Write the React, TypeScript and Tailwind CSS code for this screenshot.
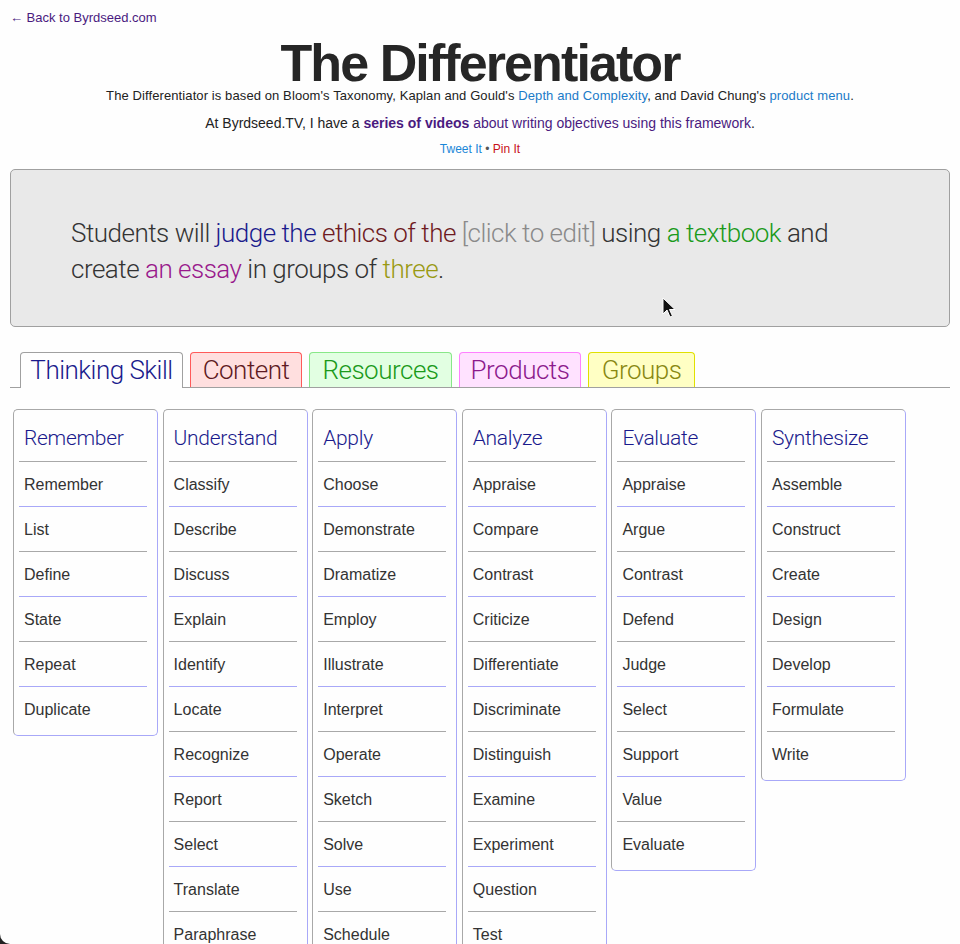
import React from "react";

const columns: { title: string; items: string[] }[] = [
  { title: "Remember", items: ["Remember", "List", "Define", "State", "Repeat", "Duplicate"] },
  {
    title: "Understand",
    items: ["Classify", "Describe", "Discuss", "Explain", "Identify", "Locate", "Recognize", "Report", "Select", "Translate", "Paraphrase", "Review"],
  },
  {
    title: "Apply",
    items: ["Choose", "Demonstrate", "Dramatize", "Employ", "Illustrate", "Interpret", "Operate", "Sketch", "Solve", "Use", "Schedule", "Write"],
  },
  {
    title: "Analyze",
    items: ["Appraise", "Compare", "Contrast", "Criticize", "Differentiate", "Discriminate", "Distinguish", "Examine", "Experiment", "Question", "Test", "Categorize"],
  },
  { title: "Evaluate", items: ["Appraise", "Argue", "Contrast", "Defend", "Judge", "Select", "Support", "Value", "Evaluate"] },
  { title: "Synthesize", items: ["Assemble", "Construct", "Create", "Design", "Develop", "Formulate", "Write"] },
];

const sans = "font-['Liberation_Sans',Arial,sans-serif]";
const light = "font-['Roboto','Liberation_Sans',sans-serif] font-light";

export default function App() {
  return (
    <div className={`relative h-[944px] overflow-hidden bg-[#fefefe] ${sans} text-[#222]`}>
      <div className="px-[10px] pt-[10px]">
        <a className="block text-[13px] leading-[16px] text-[#4a1a80]">← Back to Byrdseed.com</a>
      </div>
      <h1 className="mt-[11px] text-center text-[52px] leading-[52px] font-bold tracking-[-1.9px] text-[#262626]">
        The Differentiator
      </h1>
      <p className="mt-[-1px] text-center text-[13px] leading-[16px] tracking-[0.1px] text-[#222]">
        The Differentiator is based on Bloom's Taxonomy, Kaplan and Gould's{" "}
        <span className="text-[#1a7ac8]">Depth and Complexity</span>, and David Chung's{" "}
        <span className="text-[#1a7ac8]">product menu</span>.
      </p>
      <p className="mt-[10px] text-center text-[14px] leading-[18px] text-[#222]">
        At Byrdseed.TV, I have a <span className="font-bold text-[#4a1a80]">series of videos</span>{" "}
        <span className="text-[#4a1a80]">about writing objectives using this framework</span>.
      </p>
      <p className="mt-[9px] text-center text-[12px] leading-[16px] text-[#555]">
        <span className="text-[#1a86d8]">Tweet It</span> • <span className="text-[#c8101a]">Pin It</span>
      </p>

      <div className="mx-[10px] mt-[12px] h-[158px] rounded-[5px] border border-[#a0a0a0] bg-[#e9e9e9] pl-[60px] pt-[45px]">
        <div className={`${light} text-[26px] leading-[36px] tracking-[-0.5px] text-[#333]`}>
          <div className="whitespace-nowrap">
            Students will <span className="text-[#1a1a8c]">judge the</span>{" "}
            <span className="text-[#6e1a22]">ethics of the</span>{" "}
            <span className="text-[#8a8a8a]">[click to edit]</span> using{" "}
            <span className="text-[#1a9a1a]">a textbook</span> and
          </div>
          <div className="whitespace-nowrap">
            create <span className="text-[#99198c]">an essay</span> in groups of{" "}
            <span className="text-[#999912]">three</span>.
          </div>
        </div>
      </div>

      <div className={`mx-[10px] mt-[25px] flex items-end gap-[7px] border-b border-[#a0a0a0] pl-[10px] ${light} text-[26px] tracking-[-0.5px]`}>
        <div className="-mb-px flex h-[36px] w-[163px] items-center justify-center rounded-t-[4px] border border-b-0 border-[#a0a0a0] bg-[#fefefe] text-[#1a1a8c]">
          Thinking Skill
        </div>
        <div className="flex h-[35px] w-[112px] items-center justify-center rounded-t-[4px] border border-b-0 border-[#ff5a5a] bg-[#ffdfdf] text-[#5e1a22]">
          Content
        </div>
        <div className="flex h-[35px] w-[143px] items-center justify-center rounded-t-[4px] border border-b-0 border-[#88e888] bg-[#e2ffe2] text-[#1a9a1a]">
          Resources
        </div>
        <div className="flex h-[35px] w-[122px] items-center justify-center rounded-t-[4px] border border-b-0 border-[#ff80ff] bg-[#ffe2ff] text-[#8c1a8c]">
          Products
        </div>
        <div className="flex h-[35px] w-[107px] items-center justify-center rounded-t-[4px] border border-b-0 border-[#e0e000] bg-[#ffffc4] text-[#888812]">
          Groups
        </div>
      </div>

      <div className="mt-[21px] flex items-start gap-[4.6px] pl-[13px]">
        {columns.map((col) => (
          <div
            key={col.title}
            className="w-[145px] rounded-[5px] border border-t-[#a8a8a8] border-l-[#a8a8a8] border-r-[#a8a8f8] border-b-[#a8a8f8] pb-[4px]"
          >
            <div className="ml-[5px] mr-[10px] flex h-[52px] items-center border-b border-[#a8a8a8] pl-[5px] pt-[6px]">
              <span className={`${light} text-[21px] tracking-[-0.3px] text-[#1a1a8c]`}>{col.title}</span>
            </div>
            {col.items.map((item, i) => {
              const last = i === col.items.length - 1;
              const border = last ? "" : i % 2 === 0 ? "border-b border-[#a8a8f8]" : "border-b border-[#a8a8a8]";
              return (
                <div
                  key={item + i}
                  className={`ml-[5px] mr-[10px] flex ${last ? "h-[44px]" : "h-[45px]"} items-center pl-[5px] pt-[2px] text-[16px] text-[#333] ${border}`}
                >
                  {item}
                </div>
              );
            })}
          </div>
        ))}
      </div>

      <svg className="absolute left-[662px] top-[297px]" width="14" height="22" viewBox="0 0 14 22">
        <path d="M1 1 L1 17 L5 13 L8 20 L10.5 19 L7.5 12.5 L13 12.5 Z" fill="#111" stroke="#fff" strokeWidth="1" />
      </svg>

      <div className="absolute bottom-0 left-0 h-[10px] w-[10px] bg-[#222]">
        <div className="h-full w-full rounded-bl-[10px] bg-[#fefefe]" />
      </div>
    </div>
  );
}
